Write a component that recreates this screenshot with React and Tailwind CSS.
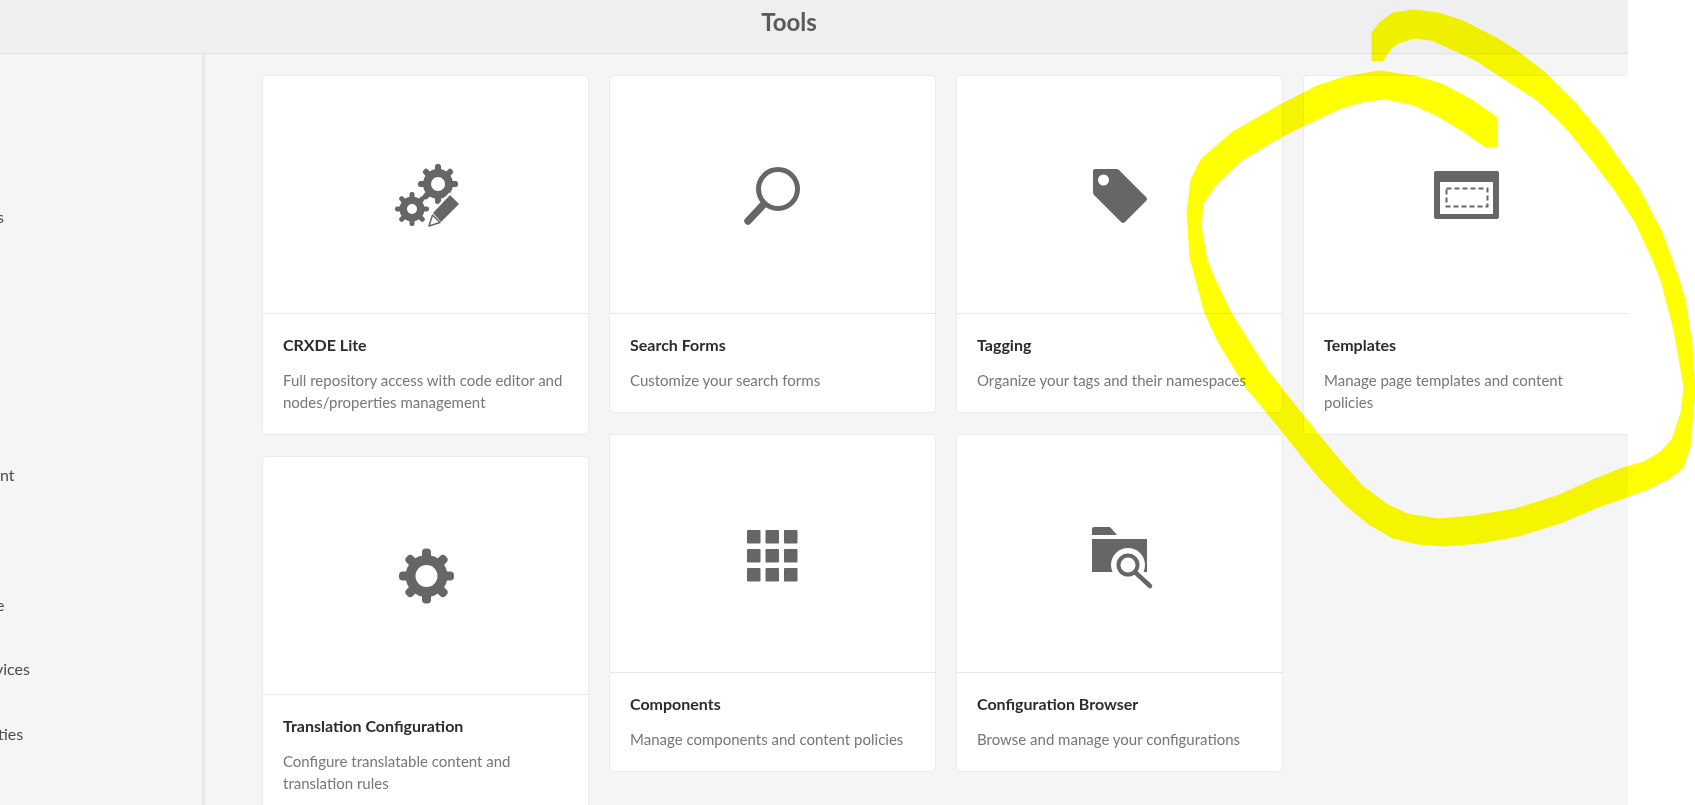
import React from 'react';

const ink = '#666666';

function Gear({ cx, cy, body, tooth, toothW, hole, teeth = 8, holeFill = '#ffffff' }) {
  const angles = Array.from({ length: teeth }, (_, i) => (360 / teeth) * i);
  return (
    <g>
      {angles.map((a) => (
        <rect
          key={a}
          x={cx - toothW / 2}
          y={cy - tooth}
          width={toothW}
          height={tooth}
          rx={toothW / 2.4}
          fill={ink}
          transform={`rotate(${a} ${cx} ${cy})`}
        />
      ))}
      <circle cx={cx} cy={cy} r={body} fill={ink} />
      <circle cx={cx} cy={cy} r={hole} fill={holeFill} />
    </g>
  );
}

function CrxdeIcon() {
  return (
    <svg width="80" height="80" viewBox="386 154 80 80">
      <Gear cx={438} cy={183} body={15} tooth={20} toothW={6} hole={7} />
      <Gear cx={412} cy={208} body={12.5} tooth={17} toothW={5} hole={5} />
      <path d="M427 227 L432 212 L450 193 L460 203 L442 222 Z" fill="#ffffff" stroke="#ffffff" strokeWidth="3" strokeLinejoin="round" />
      <path d="M433 212 L450 194 L459 203 L441 221 Z" fill={ink} />
      <path d="M432.5 214 L429 225 L440 221.5 Z" fill="#ffffff" stroke={ink} strokeWidth="1.5" strokeLinejoin="round" />
    </svg>
  );
}

function SearchIcon() {
  return (
    <svg width="80" height="80" viewBox="733 154 80 80">
      <circle cx="778" cy="188" r="19.5" fill="none" stroke={ink} strokeWidth="5" />
      <path d="M763 204 L748 220" stroke={ink} strokeWidth="7.5" strokeLinecap="round" />
    </svg>
  );
}

function TagIcon() {
  return (
    <svg width="80" height="80" viewBox="1080 154 80 80">
      <path
        d="M1095 168 H1116 Q1118 168 1119 169 L1146 196 Q1148 198 1146 200 L1125 221 Q1123 223 1121 221 L1094 194 Q1093 193 1093 191 V170 Q1093 168 1095 168 Z"
        fill={ink}
      />
      <circle cx="1103.5" cy="179" r="5.5" fill="#ffffff" />
    </svg>
  );
}

function TemplatesIcon() {
  return (
    <svg width="80" height="80" viewBox="1427 155 80 80">
      <rect x="1434" y="171" width="65" height="48" rx="2" fill={ink} />
      <rect x="1440" y="182" width="53" height="32" fill="#ffffff" />
      <rect x="1446.5" y="188.5" width="41" height="18" fill="none" stroke={ink} strokeWidth="2" strokeDasharray="5 3" />
    </svg>
  );
}

function GearIcon() {
  return (
    <svg width="80" height="80" viewBox="386 535 80 80">
      <Gear cx={426.5} cy={575} body={21} tooth={27.5} toothW={9} hole={11} />
    </svg>
  );
}

function GridIcon() {
  const xs = [746, 764.5, 783];
  const ys = [530, 549, 568];
  return (
    <svg width="80" height="80" viewBox="732 514 80 80">
      {ys.map((y) => xs.map((x) => <rect key={`${x}-${y}`} x={x} y={y} width="13.5" height="13.5" rx="1" fill={ink} />))}
    </svg>
  );
}

function FolderIcon() {
  return (
    <svg width="80" height="80" viewBox="1080 514 80 80">
      <path d="M1094 527 H1110 L1117 535 H1092 V529 Q1092 527 1094 527 Z" fill={ink} />
      <path d="M1092 539 H1147 V572 H1092 Z" fill={ink} />
      <circle cx="1128" cy="565" r="17" fill="#ffffff" />
      <circle cx="1128" cy="565" r="9.5" fill="none" stroke={ink} strokeWidth="4" />
      <path d="M1136 573 L1150 586" stroke={ink} strokeWidth="4.5" strokeLinecap="round" />
    </svg>
  );
}

const columns = [
  [
    { title: 'CRXDE Lite', desc: ['Full repository access with code editor and', 'nodes/properties management'], icon: <CrxdeIcon /> },
    { title: 'Translation Configuration', desc: ['Configure translatable content and', 'translation rules'], icon: <GearIcon /> },
  ],
  [
    { title: 'Search Forms', desc: ['Customize your search forms'], icon: <SearchIcon /> },
    { title: 'Components', desc: ['Manage components and content policies'], icon: <GridIcon /> },
  ],
  [
    { title: 'Tagging', desc: ['Organize your tags and their namespaces'], icon: <TagIcon /> },
    { title: 'Configuration Browser', desc: ['Browse and manage your configurations'], icon: <FolderIcon /> },
  ],
  [
    { title: 'Templates', desc: ['Manage page templates and content', 'policies'], icon: <TemplatesIcon /> },
  ],
];

const sideLabels = [
  { text: 's', cls: 'mt-[153px] -ml-[3px]' },
  { text: 'nt', cls: 'mt-[238px]' },
  { text: 'e', cls: 'mt-[110px] -ml-[4px]' },
  { text: 'vices', cls: 'mt-[44px] -ml-[5px]' },
  { text: 'ties', cls: 'mt-[45px] -ml-[2px]' },
];

function Card({ item }) {
  return (
    <div className="w-[327px] shrink-0 rounded-[4px] border border-[#ebebeb] bg-white overflow-hidden">
      <div className="h-[238px] flex items-center justify-center border-b border-[#e8e8e8]">{item.icon}</div>
      <div className="px-[20px] pt-[20px] pb-[21px]">
        <div className="text-[16px] leading-[22px] font-bold text-[#2c2c2c]">{item.title}</div>
        <div className="mt-[13px] text-[15px] leading-[22px] text-[#777777]">
          {item.desc.map((line) => (
            <div key={line} className="whitespace-nowrap">{line}</div>
          ))}
        </div>
      </div>
    </div>
  );
}

const scribble =
  '1373,33 1381,23 1393,14 1414,11 1438,14 1463,22 1498,40 1518,53 1546,75 1574,103 1602,137 1637,187 1661,233 1678,280 1684,300 ' +
  '1691,345 1694,390 1689,447 1682,467 1668,478 1650,487 1626,496 1595,507 1560,522 1518,535 1480,542 1445,545 1418,543 1393,537 1369,523 1345,503 1320,477 1296,447 1272,417 1247,387 1220,343 1206,313 1197,280 ' +
  '1191,257 1188,213 1192,180 1202,160 1233,133 1282,105 1317,87 1345,78 1379,72 1414,77 1442,85 1470,100 1496,118 1496,146 1486,146 ' +
  '1463,130 1438,115 1414,104 1386,98 1365,100 1341,107 1303,125 1279,137 1240,160 1216,183 1202,203 1200,227 1206,260 1214,280 ' +
  '1230,313 1251,347 1268,373 1303,417 1338,460 1362,487 1386,505 1407,515 1438,520 1473,517 1515,510 1557,497 1595,480 1626,468 1644,463 1661,453 1673,440 1682,413 1685,387 1675,330 1662,280 ' +
  '1654,260 1637,223 1616,190 1591,157 1571,132 1557,117 1536,98 1511,82 1477,60 1456,50 1431,39 1414,37 1398,42 1390,48 1382,60 1373,60';

export default function App() {
  return (
    <div className="relative w-[1695px] h-[805px] overflow-hidden bg-white" style={{ fontFamily: '"Lato", "Noto Sans", sans-serif' }}>
      <div className="w-[1628px] h-full flex flex-col overflow-hidden bg-[#f5f5f5]">
        <header className="h-[54px] shrink-0 flex items-center justify-center pr-[50px] bg-[#efefef] border-b border-[#e1e1e1]">
          <h1 className="text-[24px] font-bold text-[#5a5a5a] -mt-[10px]">Tools</h1>
        </header>
        <div className="flex flex-1 min-h-0">
          <aside className="w-[205px] shrink-0 border-r-[3px] border-[#e8e8e8] flex flex-col text-[16px] leading-[20px] text-[#4b4b4b] overflow-hidden">
            {sideLabels.map((s) => (
              <div key={s.text} className={s.cls}>{s.text}</div>
            ))}
          </aside>
          <main className="flex-1 flex gap-[20px] pt-[21px] pl-[57px]">
            {columns.map((col) => (
              <div key={col[0].title} className="flex flex-col gap-[21px]">
                {col.map((item) => (
                  <Card key={item.title} item={item} />
                ))}
              </div>
            ))}
          </main>
        </div>
      </div>
      <svg className="absolute inset-0 pointer-events-none mix-blend-multiply" width="1695" height="805" viewBox="0 0 1695 805">
        <polygon points={scribble} fill="#ffff00" stroke="#ffff00" strokeWidth="3" strokeLinejoin="round" />
      </svg>
    </div>
  );
}
